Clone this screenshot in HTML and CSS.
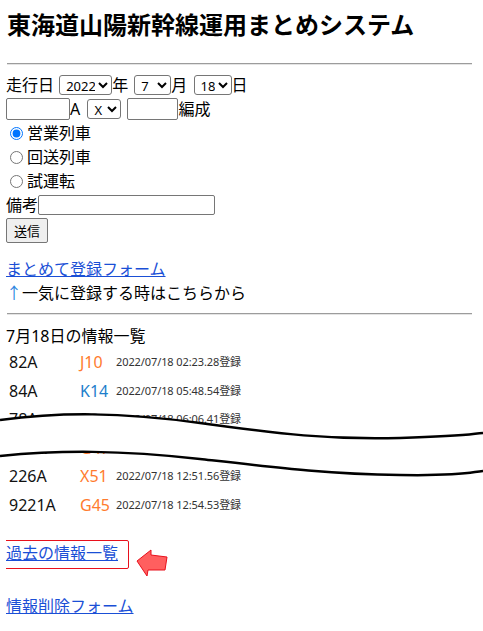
FILE: index.html
```html
<!DOCTYPE html>
<html>

<head>
    <meta charset="utf-8">
    <title>東海道山陽新幹線運用まとめシステム</title>
    <link rel="stylesheet" href="styles.css">
</head>

<body>
    <h2 class="title">東海道山陽新幹線運用まとめシステム</h2>
    <hr>
    <form class="entry">
        <div class="line">走行日 <select class="sel-year"><option>2022</option></select>年 <select class="sel-month"><option>7</option></select>月 <select class="sel-day"><option>18</option></select>日</div>
        <div class="line"><input type="text" class="in-num">A <select class="sel-x"><option>X</option></select><input type="text" class="in-set">編成</div>
        <label class="line radio"><input type="radio" name="kind" checked>営業列車</label>
        <label class="line radio"><input type="radio" name="kind">回送列車</label>
        <label class="line radio"><input type="radio" name="kind">試運転</label>
        <div class="line">備考<input type="text" class="in-memo"></div>
        <div class="line"><button type="button" class="send">送信</button></div>
    </form>

    <p class="bulk">
        <a href="#">まとめて登録フォーム</a><br>
        <span class="up">↑</span>一気に登録する時はこちらから
    </p>
    <hr>

    <div class="today">
        <div class="today-head">7月18日の情報一覧</div>
        <div class="rows">
            <div class="row"><span class="train">82A</span><span class="code orange">J10</span><span class="stamp">2022/07/18 02:23.28登録</span></div>
            <div class="row"><span class="train">84A</span><span class="code blue">K14</span><span class="stamp">2022/07/18 05:48.54登録</span></div>
            <div class="row"><span class="train">78A</span><span class="code grey">K3</span><span class="stamp">2022/07/18 06:06.41登録</span></div>
            <div class="row"><span class="train">204A</span><span class="code orange">G47</span><span class="stamp">2022/07/18 11:40.12登録</span></div>
            <div class="row"><span class="train">226A</span><span class="code orange">X51</span><span class="stamp">2022/07/18 12:51.56登録</span></div>
            <div class="row"><span class="train">9221A</span><span class="code orange">G45</span><span class="stamp">2022/07/18 12:54.53登録</span></div>
        </div>
    </div>

    <div class="past">
        <a href="#" class="past-link">過去の情報一覧</a>
        <svg class="pointer" width="34" height="32" viewBox="0 0 34 32">
            <polygon points="2,15 16,4 16,9 32,11 30,24 13,24 12,30" fill="#ff5f5f" stroke="#e8101c" stroke-width="1" stroke-linejoin="round"/>
        </svg>
    </div>

    <p class="delete"><a href="#">情報削除フォーム</a></p>

    <!-- cut mark over the list -->
    <svg class="cut" width="483" height="631" viewBox="0 0 483 631">
        <path d="M0,420 C60,412 120,412 200,423 C280,434 330,440 400,438 C470,436 470,434 483,433 L483,471 C470,472 470,476 400,475 C330,474 280,468 200,459 C120,450 60,450 0,456 Z" fill="#fff"/>
        <path d="M0,420 C60,412 120,412 200,423 C280,434 330,440 400,438 C470,436 470,434 483,433" fill="none" stroke="#000" stroke-width="2.5"/>
        <path d="M0,456 C60,450 120,450 200,459 C280,468 330,474 400,475 C470,476 470,472 483,471" fill="none" stroke="#000" stroke-width="2.5"/>
    </svg>
</body>

</html>
```

FILE: styles.css
```css
body {
    margin: 0 11px 0 6px;
    font-family: 'Noto Sans', 'Noto Sans CJK JP', sans-serif;
    font-size: 16px;
    line-height: 24px;
    color: #000;
}
a {
    color: #1a4fd6;
}

.title {
    margin: 10px 0 23px 1px;
    font-size: 24px;
    line-height: 30px;
    font-weight: 700;
}

hr {
    height: 0;
    border: 0;
    border-top: 1px solid #9c9c9c;
    border-bottom: 1px solid #e4e4e4;
    margin: 8px 0 8px 1px;
}

.entry {
    margin: 0;
}
.line {
    display: flex;
    align-items: center;
    height: 24px;
    white-space: pre;
}

select,
input[type=text],
button {
    box-sizing: border-box;
    font-family: 'Noto Sans', 'Noto Sans CJK JP', sans-serif;
    font-size: 13px;
    margin: 0;
    color: #000;
}
select {
    height: 20px;
    padding: 0 0 0 2px;
    border: 1px solid #767676;
    border-radius: 3px;
    background: #fff;
}
select.sel-year { width: 53px; margin-left: 1px; }
select.sel-month { width: 37px; margin-left: 2px; }
select.sel-day { width: 38px; margin-left: 2px; }
select.sel-x { width: 34px; margin-left: 3px; }

input[type=text] {
    height: 22px;
    border: 1px solid #767676;
    border-radius: 2px;
    padding: 1px 2px;
}
input.in-num { width: 64px; }
input.in-set { width: 51px; margin-left: 6px; }
input.in-memo { width: 177px; height: 20px; }

.radio input {
    width: 13px;
    height: 13px;
    margin: 0 4px 0 4px;
    accent-color: #0075ff;
}

button.send {
    height: 25px;
    width: 42px;
    padding: 0 5px;
    border: 1px solid #767676;
    border-radius: 2px;
    background: #efefef;
    margin-top: 2px;
}

.bulk {
    margin: 16px 0 0;
}
.up {
    color: #2f86e0;
}

.today {
    margin-top: 9px;
}
.rows {
    display: flex;
    flex-direction: column;
}
.row {
    display: grid;
    grid-template-columns: 71px 36px auto;
    align-items: center;
    height: 28.5px;
    padding-left: 3px;
}
.train {
    color: #111;
}
.code.orange {
    color: #ff7b2e;
}
.code.blue {
    color: #1d7ecb;
}
.code.grey {
    color: #b8b8b8;
}
.stamp {
    font-size: 11px;
    color: #333;
    letter-spacing: -0.1px;
}

.past {
    display: flex;
    align-items: flex-start;
    margin-top: 21px;
    margin-left: -3px;
}
.past-link {
    display: inline-block;
    border: 1px solid #e8101c;
    border-radius: 2px;
    padding: 0 10px 3px 2px;
    line-height: 24px;
}
.pointer {
    margin: 6px 0 0 6px;
}

.delete {
    margin: 16px 0 0;
}

.cut {
    position: absolute;
    top: 0;
    left: 0;
    pointer-events: none;
}
```
